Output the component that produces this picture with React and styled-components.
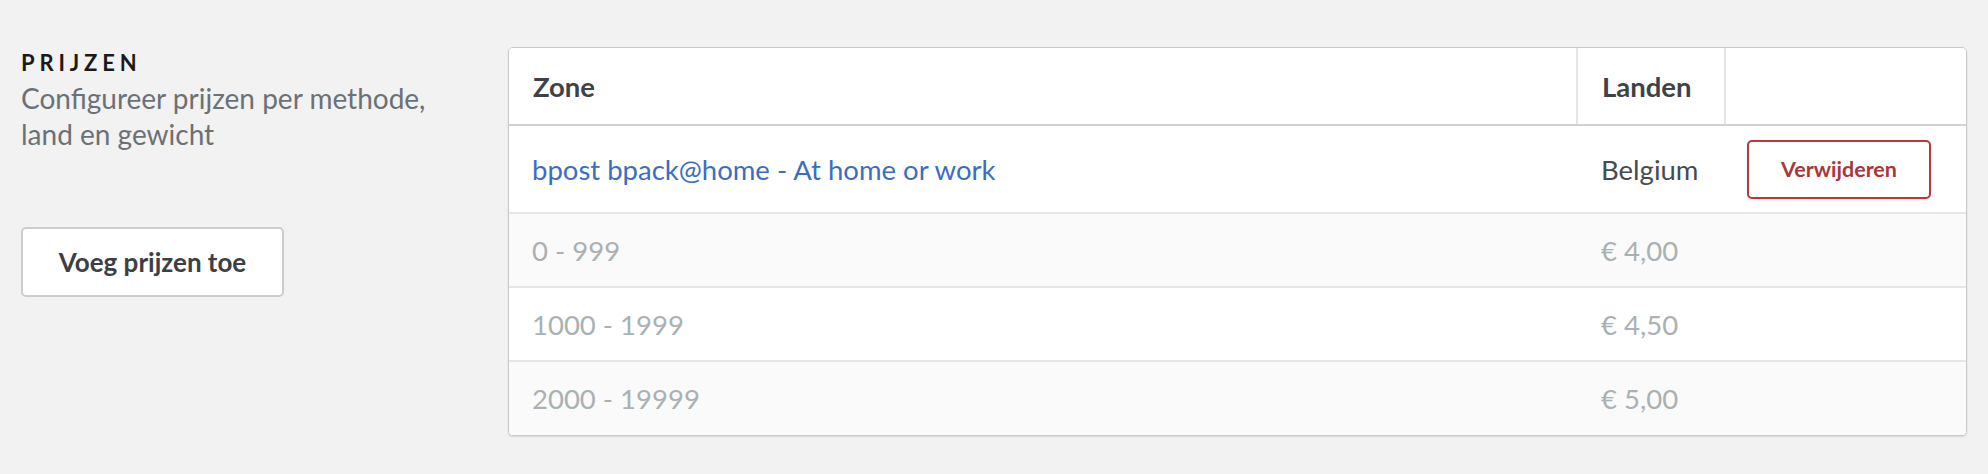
import React from "react";
import styled, { createGlobalStyle } from "styled-components";

const Global = createGlobalStyle`
  html, body { margin: 0; padding: 0; background: #f2f2f2; }
  body { font-family: Lato, "Open Sans", sans-serif; -webkit-font-smoothing: antialiased; }
`;

const Page = styled.div`
  display: grid;
  grid-template-columns: 466px 1fr;
  column-gap: 21px;
  align-items: start;
  padding: 47px 21px 40px 21px;
  min-height: 474px;
  box-sizing: border-box;
`;

const Aside = styled.div`
  display: flex;
  flex-direction: column;
  align-items: flex-start;
`;

const Title = styled.h2`
  margin: 1px 0 0 0;
  font-size: 22px;
  line-height: 30px;
  font-weight: 700;
  letter-spacing: 0.22em;
  color: #1a1a1a;
`;

const Description = styled.p`
  margin: 2px 0 0 0;
  font-size: 28px;
  line-height: 36px;
  color: #6b7176;
`;

const AddButton = styled.button`
  margin-top: 75px;
  width: 263px;
  height: 70px;
  background: #fff;
  border: 2px solid #c9cdd0;
  border-radius: 5px;
  font-family: inherit;
  font-size: 26px;
  font-weight: 700;
  color: #3d4043;
  cursor: pointer;
`;

const Card = styled.div`
  background: #fff;
  border: 1px solid #c6cacd;
  border-radius: 5px;
  box-shadow: 0 1px 2px rgba(0, 0, 0, 0.12);
  overflow: hidden;
`;

const Row = styled.div`
  display: grid;
  grid-template-columns: 1fr 148px 242px;
  align-items: stretch;
  box-sizing: border-box;
  height: ${(p) => p.$h}px;
  background: ${(p) => (p.$striped ? "#fafafa" : "#fff")};
  border-bottom: ${(p) => (p.$last ? "none" : p.$head ? "2px solid #cfd3d6" : "2px solid #e6e6e6")};
  font-size: 27.5px;
`;

const HeadCell = styled.div`
  display: flex;
  align-items: center;
  padding: 0 24px;
  font-weight: 700;
  color: #3e4245;
  & + & { border-left: 2px solid #e3e5e6; }
`;

const Cell = styled.div`
  display: flex;
  align-items: center;
  padding: 0 ${(p) => (p.$first ? 23 : 25)}px;
  color: ${(p) => p.$color || "#aab1b2"};
  white-space: nowrap;
`;

const ZoneLink = styled.a`
  color: #3b6ec0;
  text-decoration: none;
`;

const DeleteButton = styled.button`
  width: 184px;
  height: 59px;
  margin-left: -2px;
  background: #fff;
  border: 2px solid #b23c3c;
  border-radius: 5px;
  box-shadow: 0 1px 3px rgba(0, 0, 0, 0.1);
  font-family: inherit;
  font-size: 21.5px;
  font-weight: 700;
  color: #a8373a;
  cursor: pointer;
`;

const prices = [
  { range: "0 - 999", price: "€ 4,00" },
  { range: "1000 - 1999", price: "€ 4,50" },
  { range: "2000 - 19999", price: "€ 5,00" },
];

export default function App() {
  return (
    <>
      <Global />
      <Page>
        <Aside>
          <Title>PRIJZEN</Title>
          <Description>
            Configureer prijzen per methode,
            <br />
            land en gewicht
          </Description>
          <AddButton>Voeg prijzen toe</AddButton>
        </Aside>
        <Card>
          <Row $head $h={78}>
            <HeadCell>Zone</HeadCell>
            <HeadCell>Landen</HeadCell>
            <HeadCell />
          </Row>
          <Row $h={88}>
            <Cell $first>
              <ZoneLink href="#">bpost bpack@home - At home or work</ZoneLink>
            </Cell>
            <Cell $color="#464b50">Belgium</Cell>
            <Cell>
              <DeleteButton>Verwijderen</DeleteButton>
            </Cell>
          </Row>
          {prices.map((p, i) => (
            <Row key={p.range} $h={i === prices.length - 1 ? 73 : 74} $striped={i % 2 === 0} $last={i === prices.length - 1}>
              <Cell $first>{p.range}</Cell>
              <Cell>{p.price}</Cell>
              <Cell />
            </Row>
          ))}
        </Card>
      </Page>
    </>
  );
}
